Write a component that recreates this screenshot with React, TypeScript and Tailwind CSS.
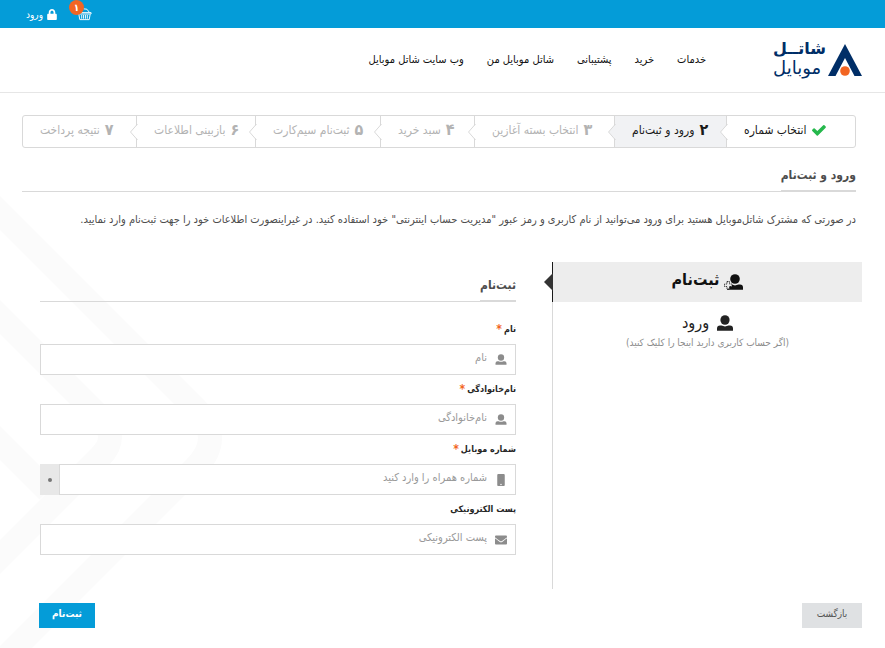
import type { ReactNode } from "react";
import clsx from "clsx";
import { FaEnvelope, FaLock, FaMobile } from "react-icons/fa";

const navLinks = ["خدمات", "خرید", "پشتیبانی", "شاتل موبایل من", "وب سایت شاتل موبایل"];

const steps = [
  { number: "۱", title: "انتخاب شماره", state: "done" },
  { number: "۲", title: "ورود و ثبت‌نام", state: "active" },
  { number: "۳", title: "انتخاب بسته آغازین", state: "next" },
  { number: "۴", title: "سبد خرید", state: "next" },
  { number: "۵", title: "ثبت‌نام سیم‌کارت", state: "next" },
  { number: "۶", title: "بازبینی اطلاعات", state: "next" },
  { number: "۷", title: "نتیجه پرداخت", state: "next" },
];

const UserIcon = ({ className }: { className?: string }) => (
  <svg viewBox="0 0 16 16" fill="currentColor" className={className} aria-hidden="true">
    <ellipse cx="8" cy="5" rx="4.6" ry="4.8" />
    <path d="M0 15.800V13.500Q0 10.600 3 10.600H4.500Q8 12.200 11.500 10.600H13Q16 10.600 16 13.500v2.300z" />
  </svg>
);

const UserPlusIcon = ({ className }: { className?: string }) => (
  <svg viewBox="0 0 20 16" className={className} aria-hidden="true">
    <g fill="currentColor">
      <ellipse cx="12" cy="5" rx="4.8" ry="4.8" />
      <path d="M4 15.800V13.500Q4 10.600 7 10.600H8.500Q12 12.200 15.500 10.600H17Q20 10.600 20 13.500v2.300z" />
    </g>
    <path
      d="M4 7.500h2.500v2.500H9v2.500H6.500V15H4v-2.500H1.500V10H4z"
      fill="#ededed"
      stroke="currentColor"
      strokeWidth="0.8"
      strokeDasharray="1.5 0.7"
    />
  </svg>
);

const CheckIcon = () => (
  <svg viewBox="120 250 1560 1290" fill="#25b84c" className="h-3 w-3.5" aria-hidden="true">
    <path d="M1671 566q0 40-28 68l-724 724-136 136q-28 28-68 28t-68-28l-136-136-362-362q-28-28-28-68t28-68l136-136q28-28 68-28t68 28l294 295 656-657q28-28 68-28t68 28l136 136q28 28 28 68z" />
  </svg>
);

const BasketIcon = () => (
  <svg viewBox="0 0 16 14" fill="none" stroke="white" className="h-3.5 w-[15px]" aria-hidden="true">
    <path d="M7 1.500q4-1 6 3.500M1 5.500h14v1.500H1zM2 7.500l1 5.500h10l1-5.500" />
    <path d="M5 8v4M7 8v4M9 8v4M11 8v4" />
  </svg>
);

const BackgroundPattern = () => (
  <svg
    viewBox="0 0 240 648"
    fill="none"
    stroke="#fbfbfb"
    strokeWidth="24"
    className="absolute top-0 left-0 -z-10 h-[648px] w-[240px]"
    aria-hidden="true"
  >
    <path d="M-20 193 195 408Q225 438 195 468L-20 683" />
    <path d="M-20 297 100 417Q120 437 100 457L-20 577" />
    <path d="M-20 423 48 491" />
  </svg>
);

const Logo = () => (
  <a
    href="#"
    className="flex items-center gap-0.5 font-['DejaVu_Sans',sans-serif] text-[#002e67]"
    aria-label="شاتل موبایل"
  >
    <svg viewBox="0 0 34 32" className="h-8 w-[34px]" aria-hidden="true">
      <path d="M17 0 34 32H26.500L17 14 7.500 32H0z" fill="#002e67" />
      <circle cx="17" cy="27" r="4.800" fill="#f26522" />
    </svg>
    <span className="flex flex-col pb-1 text-left">
      <span className="text-[16px] leading-[19px] font-bold">شاتــل</span>
      <span className="text-[18px] leading-[19px]">موبایل</span>
    </span>
  </a>
);

const TopBar = () => (
  <div dir="ltr" className="flex h-7 items-center gap-5 bg-[#049cd8] pl-[26px] text-white">
    <a href="#" className="flex items-center gap-1 text-[10px]">
      ورود
      <FaLock className="h-[11px] w-2.5" />
    </a>
    <a href="#" className="relative" aria-label="سبد خرید">
      <BasketIcon />
      <span className="absolute -top-[7px] -left-2 flex h-[15px] w-[15px] items-center justify-center rounded-full bg-[#f26522] text-[10px] font-bold">
        ۱
      </span>
    </a>
  </div>
);

const Header = () => (
  <header className="flex h-[65px] items-center border-b border-[#e6e6e6] pr-[23px]">
    <Logo />
    <nav className="flex gap-[23px] pr-[67px] text-[11px] text-[#111]">
      {navLinks.map((link) => (
        <a key={link} href="#">
          {link}
        </a>
      ))}
    </nav>
  </header>
);

const Steps = () => (
  <ol className="grid h-[33px] grid-cols-[129fr_112fr_140fr_94fr_125fr_119fr_113fr] rounded-[3px] border border-[#d9d9d9] bg-white">
    {steps.map(({ number, title, state }, i) => (
      <li
        key={number}
        className={clsx(
          "relative flex items-center justify-end gap-[5px] pb-1 pl-[17px] text-[12px] whitespace-nowrap",
          i < steps.length - 1 && "border-l border-[#d9d9d9]",
          state === "active" && "bg-[#f1f2f4]",
          state === "next" ? "text-[#b3b3b3]" : "text-[#1a1a1a]",
        )}
      >
        {state === "done" ? <CheckIcon /> : <span className="text-[16px] font-bold">{number}</span>}
        <span>{title}</span>
        {i < steps.length - 1 && (
          <svg
            viewBox="0 0 8 16"
            className={clsx(
              "absolute top-2 -left-[7px] z-10 h-4 w-2",
              state === "active" ? "fill-[#f1f2f4]" : "fill-white",
            )}
            aria-hidden="true"
          >
            <path d="M8 0 7.500.5.500 8l7 7.500.5.5z" />
            <path d="M7.500 0 .5 8l7 8" fill="none" stroke="#d9d9d9" />
          </svg>
        )}
      </li>
    ))}
  </ol>
);

const SectionTitle = ({ children }: { children: ReactNode }) => (
  <h2 className="flex h-8 border-b border-[#d9d9d9] text-[12px] font-bold text-[#4d4d4d]">
    <span className="h-8 border-b-2 border-[#d9d9d9] leading-[30px]">{children}</span>
  </h2>
);

type FieldProps = {
  id: string;
  label: string;
  placeholder: string;
  icon: ReactNode;
  type?: string;
  required?: boolean;
  suffix?: ReactNode;
};

const Field = ({ id, label, placeholder, icon, type = "text", required, suffix }: FieldProps) => (
  <div>
    <label htmlFor={id} className="flex h-[29px] items-center gap-0.5 text-[9px] font-bold text-[#262626]">
      {label}
      {required && <span className="pb-0.5 text-[12px] leading-3 text-[#f26522]">*</span>}
    </label>
    <div className={clsx("flex h-[31px] items-center border border-[#d9d9d9] bg-white pr-2", suffix && "border-l-0")}>
      <span className="flex w-3 justify-center text-[#8c8c8c]">{icon}</span>
      <input
        id={id}
        type={type}
        dir="rtl"
        placeholder={placeholder}
        className="h-full min-w-0 flex-1 pr-2 pb-1 text-[11px] outline-none placeholder:text-[#999]"
      />
      {suffix}
    </div>
  </div>
);

const RegisterForm = () => (
  <form id="register" className="pr-9">
    <div className="pt-2">
      <SectionTitle>ثبت‌نام</SectionTitle>
    </div>
    <div className="flex flex-col pt-[13px]">
      <Field id="first-name" label="نام" placeholder="نام" required icon={<UserIcon className="h-[11px] w-3" />} />
      <Field
        id="last-name"
        label="نام‌خانوادگی"
        placeholder="نام‌خانوادگی"
        required
        icon={<UserIcon className="h-[11px] w-3" />}
      />
      <Field
        id="mobile"
        type="tel"
        label="شماره موبایل"
        placeholder="شماره همراه را وارد کنید"
        required
        icon={<FaMobile className="h-3 w-3" />}
        suffix={
          <span className="flex h-[31px] w-5 items-center justify-center border-r border-[#d9d9d9] bg-[#e8e8e8]">
            <span className="h-1 w-1 rounded-full bg-[#777]" />
          </span>
        }
      />
      <Field
        id="email"
        type="email"
        label="پست الکترونیکی"
        placeholder="پست الکترونیکی"
        icon={<FaEnvelope className="h-3 w-3" />}
      />
    </div>
  </form>
);

const AccountTabs = () => (
  <aside className="min-h-[327px] border-l border-[#d9d9d9]">
    <a
      href="#register"
      className="relative -ml-px flex h-10 items-center justify-center gap-1 border-l border-[#1a1a1a] bg-[#ededed] text-[16px] font-bold text-[#111]"
    >
      <UserPlusIcon className="h-4 w-5" />
      <span className="pb-1">ثبت‌نام</span>
      <svg viewBox="0 0 9 18" className="absolute top-[11px] -left-[9px] h-[18px] w-[9px]" aria-hidden="true">
        <path d="M9 0v18L0 9z" fill="#333" />
      </svg>
    </a>
    <a href="#" className="flex flex-col items-center pt-[7px] text-[#222]">
      <span className="flex h-7 items-center gap-2 text-[16px]">
        <UserIcon className="h-4 w-4" />
        ورود
      </span>
      <span className="text-[10px] leading-3 text-[#8c8c8c]">(اگر حساب کاربری دارید اینجا را کلیک کنید)</span>
    </a>
  </aside>
);

const App = () => {
  return (
    <div
      dir="rtl"
      className="relative isolate min-h-screen overflow-hidden bg-white font-['DejaVu_Sans_Condensed','DejaVu_Sans',sans-serif]"
    >
      <BackgroundPattern />
      <TopBar />
      <Header />
      <main className="pt-[22px]">
        <div className="pr-[29px] pl-[22px]">
          <Steps />
          <div className="pt-3">
            <SectionTitle>ورود و ثبت‌نام</SectionTitle>
          </div>
          <p className="pt-4 text-[11px] leading-6 text-[#4d4d4d]">
            در صورتی که مشترک شاتل‌موبایل هستید برای ورود می‌توانید از نام کاربری و رمز عبور "مدیریت حساب اینترنتی"
            خود استفاده کنید. در غیراینصورت اطلاعات خود را جهت ثبت‌نام وارد نمایید.
          </p>
        </div>
        <div className="grid grid-cols-[310fr_512fr] pt-[30px] pr-[23px] pl-10">
          <AccountTabs />
          <RegisterForm />
        </div>
        <div className="flex justify-between pt-[14px] pr-[23px] pb-5 pl-[39px] text-[10px]">
          <button type="button" className="h-[25px] w-[60px] bg-[#dfe1e3] pb-1 text-[#555]">
            بازگشت
          </button>
          <button type="submit" form="register" className="h-[25px] w-14 bg-[#049cd8] pb-1 font-bold text-white">
            ثبت‌نام
          </button>
        </div>
      </main>
    </div>
  );
};

export default App;
